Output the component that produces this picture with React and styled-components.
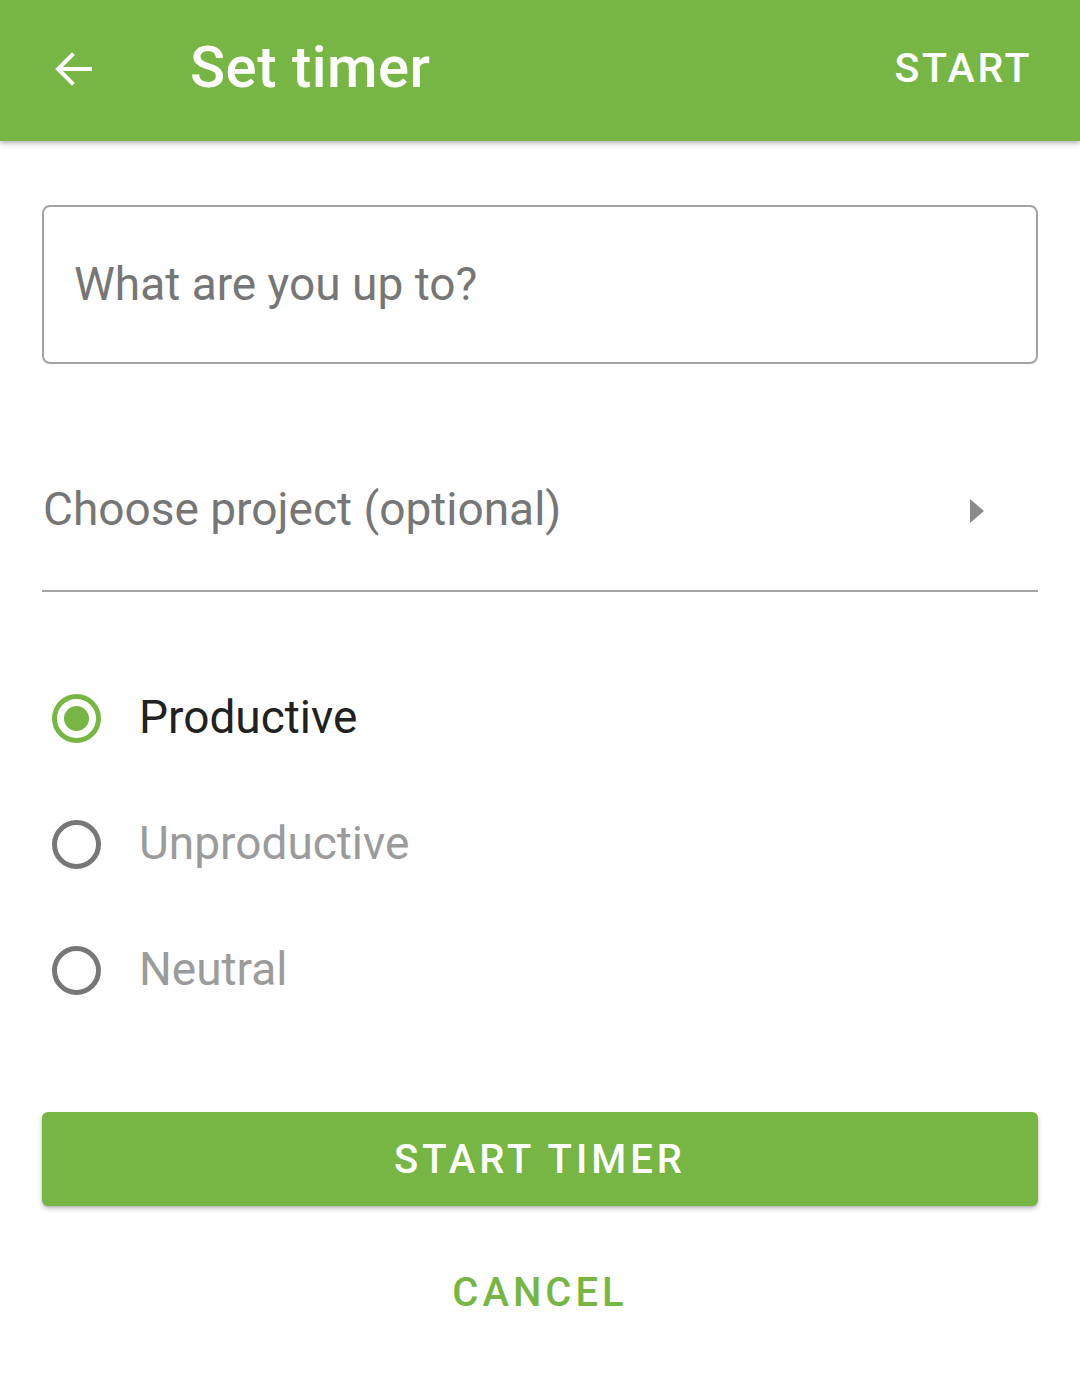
import React from "react";
import styled, { createGlobalStyle } from "styled-components";

const GREEN = "#77b544";

const Global = createGlobalStyle`
  html, body { margin: 0; padding: 0; background: #fff; }
  body { font-family: Roboto, "Noto Sans", "Liberation Sans", sans-serif; -webkit-font-smoothing: antialiased; }
  * { box-sizing: border-box; }
`;

const Page = styled.div`
  width: 1080px;
  min-height: 1374px;
  background: #fff;
  display: flex;
  flex-direction: column;
`;

const AppBar = styled.header`
  height: 141px;
  background: ${GREEN};
  display: flex;
  align-items: center;
  padding: 0 48px 0 48px;
  box-shadow: 0 3px 6px rgba(0,0,0,0.18), 0 2px 3px rgba(0,0,0,0.12);
  position: relative;
  z-index: 1;
`;

const BackButton = styled.button`
  border: 0;
  background: none;
  padding: 0;
  width: 52px;
  height: 52px;
  display: flex;
  align-items: center;
  justify-content: center;
  color: #fff;
  cursor: pointer;
  margin-top: -4px;
`;

const Title = styled.h1`
  margin: 0 0 0 90px;
  flex: 1;
  color: #fff;
  font-size: 58px;
  font-weight: 500;
  letter-spacing: 0.5px;
  line-height: 1;
  padding-bottom: 8px;
`;

const BarAction = styled.button`
  border: 0;
  background: none;
  padding: 0;
  color: #fff;
  font-family: inherit;
  font-size: 41px;
  font-weight: 500;
  letter-spacing: 2.6px;
  padding-bottom: 6px;
`;

const Content = styled.main`
  display: flex;
  flex-direction: column;
  padding: 64px 42px 0 42px;
`;

const TextBox = styled.div`
  height: 159px;
  border: 2px solid #a3a3a3;
  border-radius: 8px;
  display: flex;
  align-items: center;
  padding: 0 0 0 30px;
`;

const Placeholder = styled.span`
  font-size: 46px;
  color: #767676;
  padding-bottom: 2px;
`;

const Select = styled.div`
  margin-top: 108px;
  height: 120px;
  border-bottom: 2px solid #a3a3a3;
  display: flex;
  align-items: flex-start;
  justify-content: space-between;
  padding: 0 54px 0 1px;
`;

const SelectLabel = styled.span`
  font-size: 46px;
  color: #767676;
  line-height: 1;
  margin-top: 14px;
`;

const Caret = styled.span`
  width: 0;
  height: 0;
  border-top: 12px solid transparent;
  border-bottom: 12px solid transparent;
  border-left: 14px solid #8a8a8a;
  margin-top: 27px;
`;

const RadioGroup = styled.div`
  margin-top: 63px;
  display: flex;
  flex-direction: column;
`;

const RadioRow = styled.label`
  height: 126px;
  display: flex;
  align-items: center;
  padding-left: 10px;
  gap: 38px;
`;

const RadioCircle = styled.span`
  width: 49px;
  height: 49px;
  border-radius: 50%;
  border: 5px solid ${(p) => (p.$checked ? GREEN : "#777")};
  display: flex;
  align-items: center;
  justify-content: center;
  flex: none;
  &::after {
    content: "";
    width: 25px;
    height: 25px;
    border-radius: 50%;
    background: ${GREEN};
    display: ${(p) => (p.$checked ? "block" : "none")};
  }
`;

const RadioLabel = styled.span`
  font-size: 46px;
  color: ${(p) => (p.$checked ? "#212121" : "#9b9b9b")};
  padding-bottom: 2px;
`;

const PrimaryButton = styled.button`
  margin-top: 79px;
  height: 94px;
  width: 100%;
  border: 0;
  border-radius: 6px;
  background: ${GREEN};
  color: #fff;
  font-family: inherit;
  font-size: 40px;
  font-weight: 500;
  letter-spacing: 4px;
  box-shadow: 0 3px 5px rgba(0,0,0,0.22), 0 1px 2px rgba(0,0,0,0.12);
`;

const TextButton = styled.button`
  margin: 41px auto 0;
  border: 0;
  background: none;
  color: ${GREEN};
  font-family: inherit;
  font-size: 40px;
  font-weight: 500;
  letter-spacing: 4px;
  height: 90px;
  padding: 0 20px;
`;

const options = [
  { label: "Productive", checked: true },
  { label: "Unproductive", checked: false },
  { label: "Neutral", checked: false },
];

export default function App() {
  return (
    <Page>
      <Global />
      <AppBar>
        <BackButton aria-label="Back">
          <svg width="48" height="48" viewBox="0 0 24 24" fill="none">
            <path d="M20 12H4.5M11 5l-7 7 7 7" stroke="#fff" strokeWidth="2" strokeLinecap="square" />
          </svg>
        </BackButton>
        <Title>Set timer</Title>
        <BarAction>START</BarAction>
      </AppBar>
      <Content>
        <TextBox>
          <Placeholder>What are you up to?</Placeholder>
        </TextBox>
        <Select>
          <SelectLabel>Choose project (optional)</SelectLabel>
          <Caret />
        </Select>
        <RadioGroup>
          {options.map((o) => (
            <RadioRow key={o.label}>
              <RadioCircle $checked={o.checked} />
              <RadioLabel $checked={o.checked}>{o.label}</RadioLabel>
            </RadioRow>
          ))}
        </RadioGroup>
        <PrimaryButton>START TIMER</PrimaryButton>
        <TextButton>CANCEL</TextButton>
      </Content>
    </Page>
  );
}
